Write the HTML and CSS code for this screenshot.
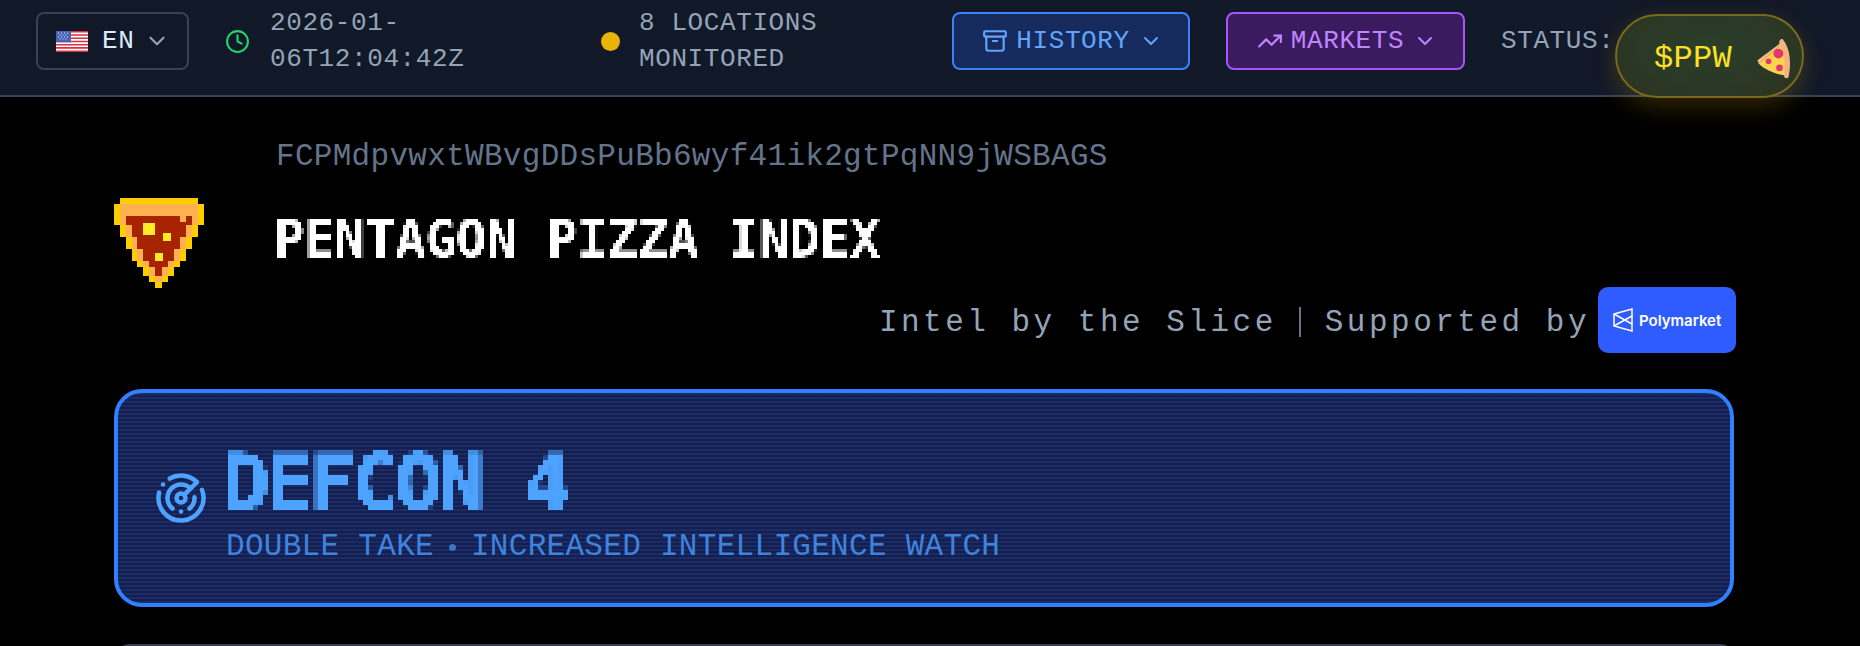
FILE: index.html
```html
<!DOCTYPE html>
<html lang="en">
<head>
    <meta charset="UTF-8">
    <meta name="viewport" content="width=device-width, initial-scale=1.0">
    <title>Pentagon Pizza Index</title>
    <link rel="stylesheet" href="styles.css">
</head>
<body>
    <!-- Blocky look for the heading text -->
    <svg class="filters" width="0" height="0">
        <filter id="pixel-sm" x="0" y="0" width="100%" height="100%">
            <feFlood x="1" y="1" width="1" height="1"/>
            <feComposite width="3" height="3"/>
            <feTile result="dots"/>
            <feComposite in="SourceGraphic" in2="dots" operator="in"/>
            <feMorphology operator="dilate" radius="1"/>
        </filter>
        <filter id="pixel-lg" x="0" y="0" width="100%" height="100%">
            <feFlood x="2" y="2" width="1" height="1"/>
            <feComposite width="5" height="5"/>
            <feTile result="dots"/>
            <feComposite in="SourceGraphic" in2="dots" operator="in"/>
            <feMorphology operator="dilate" radius="2"/>
        </filter>
    </svg>

    <!-- Top Bar -->
    <header class="top-bar">
        <button class="lang-btn">
            <svg class="flag" viewBox="0 0 32 21" width="32" height="21">
                <rect width="32" height="21" fill="#fff"/>
                <path d="M0 0h32v1.6H0zM0 3.2h32v1.6H0zM0 6.4h32V8H0zM0 9.7h32v1.6H0zM0 12.9h32v1.6H0zM0 16.1h32v1.6H0zM0 19.4h32V21H0z" fill="#d8313f"/>
                <rect width="15" height="11.3" fill="#4a63b5"/>
                <path d="M2 2h1M5 2h1M8 2h1M11 2h1M3.5 4h1M6.5 4h1M9.5 4h1M2 6h1M5 6h1M8 6h1M11 6h1M3.5 8h1M6.5 8h1M9.5 8h1" stroke="#dfe6f7" stroke-width="1"/>
            </svg>
            <span>EN</span>
            <svg class="icon chevron" viewBox="0 0 24 24" width="26" height="26"><path d="m6 9 6 6 6-6"/></svg>
        </button>

        <div class="status-item date-item">
            <svg class="icon clock" viewBox="0 0 24 24" width="25" height="25"><circle cx="12" cy="12" r="10"/><polyline points="12 6 12 12 16 14"/></svg>
            <span>2026-01-06T12:04:42Z</span>
        </div>

        <div class="status-item locations-item">
            <span class="dot"></span>
            <span>8 LOCATIONS MONITORED</span>
        </div>

        <button class="nav-btn history-btn">
            <svg class="icon" viewBox="0 0 24 24" width="26" height="26"><rect x="2" y="3" width="20" height="5" rx="1"/><path d="M4 8v11a2 2 0 0 0 2 2h12a2 2 0 0 0 2-2V8"/><path d="M10 12h4"/></svg>
            <span>HISTORY</span>
            <svg class="icon chevron" viewBox="0 0 24 24" width="24" height="24"><path d="m6 9 6 6 6-6"/></svg>
        </button>

        <button class="nav-btn markets-btn">
            <svg class="icon" viewBox="0 0 24 24" width="26" height="26"><polyline points="22 7 13.5 15.5 8.5 10.5 2 17"/><polyline points="16 7 22 7 22 13"/></svg>
            <span>MARKETS</span>
            <svg class="icon chevron" viewBox="0 0 24 24" width="24" height="24"><path d="m6 9 6 6 6-6"/></svg>
        </button>

        <span class="status-label">STATUS:</span>
    </header>

    <!-- Token pill floats over the bar -->
    <a class="token-pill">
        <span>$PPW</span>
        <svg viewBox="0 0 40 40" width="44" height="44">
            <path d="M6 25 L29 6 C33 13 33 27 31 36 C22 35 12 31 6 25Z" fill="#fcd34d"/>
            <path d="M28 3 C35 11 36 27 33 38 C31 39 29 38 29 36 C31 27 30 14 25 7 C24 5 26 2 28 3Z" fill="#f4b183"/>
            <path d="M6 25 L29 6 L25 7 L5 22Z" fill="#f6b98c"/>
            <circle cx="24" cy="16" r="4.5" fill="#e8336d"/>
            <circle cx="25" cy="29" r="3" fill="#e8336d"/>
            <circle cx="15" cy="23" r="2.6" fill="#e8336d"/>
        </svg>
    </a>

    <main class="content">
        <div class="brand">
            <svg class="logo" viewBox="27 24 270 270" width="90" height="90" shape-rendering="crispEdges">
                <path fill="#ffcc00" d="M45 24H279V42H297V106H279V141H261V177H243V212H225V230H208V258H190V276H172V294H151V276H133V258H115V230H97V212H81V177H63V141H45V106H27V42H45Z"/>
                <path fill="#ffb04f" d="M45 42H279V106H261V141H243V177H225V212H208V230H190V258H172V276H151V258H133V230H115V212H97V177H81V141H63V106H45Z"/>
                <path fill="#a82400" d="M63 78H225V95H243V78H261V106H243V141H225V177H208V212H190V230H172V258H151V230H133V212H115V177H97V141H80V106H63Z"/>
                <path fill="#ffeb26" d="M115 100H151V136H115ZM173 129H198V154H173ZM150 188H175V212H150Z"/>
            </svg>
            <div class="brand-text">
                <p class="address">FCPMdpvwxtWBvgDDsPuBb6wyf41ik2gtPqNN9jWSBAGS</p>
                <h1 class="site-title">PENTAGON PIZZA INDEX</h1>
            </div>
        </div>

        <div class="tagline">
            <span class="tagline-text">Intel by the Slice</span>
            <span class="divider"></span>
            <span class="tagline-text">Supported by</span>
            <div class="poly-badge">
                <svg viewBox="0 0 20 24" width="20" height="24" fill="none" stroke="#fff" stroke-width="1.5">
                    <path d="M1 6 19 1V23L1 18Z"/>
                    <path d="M1 6 19 16M1 18 19 8"/>
                </svg>
                <span>Polymarket</span>
            </div>
        </div>

        <section class="defcon-card">
            <svg class="icon radar" viewBox="0 0 24 24" width="54" height="54">
                <path d="M19.07 4.93A10 10 0 0 0 6.99 3.34"/><path d="M4 6h.01"/><path d="M2.29 9.62A10 10 0 1 0 21.31 8.35"/><path d="M16.24 7.76A6 6 0 1 0 8.23 16.67"/><path d="M12 18h.01"/><path d="M17.99 11.66A6 6 0 0 1 15.77 16.67"/><circle cx="12" cy="12" r="2"/><path d="m13.41 10.59 5.66-5.66"/>
            </svg>
            <div class="defcon-text">
                <h2 class="defcon-level">DEFCON 4</h2>
                <p class="defcon-desc">DOUBLE TAKE<span class="sep"></span>INCREASED INTELLIGENCE WATCH</p>
            </div>
        </section>

        <section class="next-card"></section>
    </main>
</body>
</html>
```

FILE: styles.css
```css
/* General Styling */
* {
    margin: 0;
    padding: 0;
    box-sizing: border-box;
}

html, body {
    height: 646px;
    overflow: hidden;
}

body {
    background: #000;
    font-family: "Liberation Mono", monospace;
    color: #94a3b8;
}

.filters {
    position: absolute;
}

.icon {
    fill: none;
    stroke: currentColor;
    stroke-width: 2;
    stroke-linecap: round;
    stroke-linejoin: round;
    flex: none;
}

/* Top Bar */
.top-bar {
    display: flex;
    align-items: center;
    gap: 36px;
    height: 97px;
    padding: 0 0 13px 36px;
    background: #111827;
    border-bottom: 2px solid #374151;
    font-size: 26px;
    letter-spacing: 0.6px;
    line-height: 36px;
    white-space: nowrap;
}

button {
    font: inherit;
    letter-spacing: inherit;
    cursor: pointer;
}

.lang-btn {
    display: flex;
    align-items: center;
    flex: 0 0 153px;
    height: 58px;
    padding-left: 18px;
    background: transparent;
    border: 2px solid #374151;
    border-radius: 8px;
    color: #dbeafe;
}

.flag {
    margin-right: 14px;
}

.lang-btn .chevron {
    margin-left: 10px;
    color: #94a3b8;
}

.status-item {
    display: flex;
    align-items: center;
    white-space: normal;
    color: #94a3b8;
}

.date-item {
    flex: 0 0 340px;
    gap: 20px;
}

.date-item span {
    width: 220px;
}

.locations-item {
    flex: 0 0 315px;
    gap: 19px;
}

.locations-item span:last-child {
    width: 240px;
}

.clock {
    color: #22d36e;
}

.dot {
    flex: none;
    width: 19px;
    height: 19px;
    border-radius: 50%;
    background: #eab308;
}

.nav-btn {
    display: flex;
    align-items: center;
    justify-content: center;
    gap: 8px;
    height: 58px;
    border-radius: 8px;
    border: 2px solid;
}

.nav-btn .chevron {
    margin: 0 -3px 0 1px;
}

.history-btn {
    flex: 0 0 238px;
    background: #172a5e;
    border-color: #3b82f6;
    color: #60a5fa;
}

.markets-btn {
    flex: 0 0 239px;
    background: #3a1b60;
    border-color: #a855f7;
    color: #c084fc;
}

.token-pill {
    position: absolute;
    top: 14px;
    left: 1615px;
    width: 189px;
    height: 84px;
    display: flex;
    align-items: center;
    gap: 20px;
    padding: 4px 0 0 37px;
    background: radial-gradient(ellipse at 50% 40%, #2a3f2a, #2b3320);
    border: 2px solid #7a6a1c;
    border-radius: 42px;
    box-shadow: 0 8px 24px rgba(234, 179, 8, 0.22);
    color: #fde022;
    font-size: 32px;
    letter-spacing: 0.3px;
}

/* Main Content */
.content {
    padding: 0 124px 0 114px;
}

.brand {
    display: flex;
    align-items: flex-start;
    gap: 72px;
    height: 189px;
    padding-top: 38px;
}

.logo {
    flex: none;
    margin-top: 63px;
}

.address {
    font-size: 31px;
    line-height: 44px;
    letter-spacing: 0.3px;
    color: #64748b;
}

.site-title {
    margin: 31px 0 0 -2px;
    font-family: "DejaVu Sans Mono", monospace;
    font-size: 51px;
    font-weight: bold;
    line-height: 60px;
    letter-spacing: -0.4px;
    color: #fff;
    filter: url(#pixel-sm);
}

.tagline {
    display: flex;
    align-items: center;
    justify-content: flex-end;
    height: 66px;
    margin-top: 1px;
    font-size: 31px;
    letter-spacing: 3.5px;
    color: #94a3b8;
    white-space: nowrap;
}

.tagline-text {
    padding-top: 4px;
}

.divider {
    width: 2px;
    height: 30px;
    margin: 3px 24px 0 22px;
    background: #64748b;
}

.poly-badge {
    display: flex;
    align-items: center;
    gap: 6px;
    width: 138px;
    height: 66px;
    margin-left: 8px;
    padding-left: 15px;
    background: #2e5cff;
    border-radius: 10px;
    color: #fff;
    font-family: Inter, sans-serif;
    font-size: 15px;
    font-weight: 600;
    letter-spacing: 0;
}

.defcon-card {
    display: flex;
    align-items: center;
    gap: 15px;
    height: 218px;
    margin: 36px 2px 0 0;
    padding-left: 36px;
    border: 4px solid #3080ff;
    border-radius: 28px;
    background:
        linear-gradient(90deg, rgba(255, 0, 0, 0.05), rgba(0, 255, 0, 0.02), rgba(0, 0, 255, 0.05)) 0 0 / 3px 100%,
        linear-gradient(rgba(96, 165, 250, 0.05) 50%, rgba(0, 0, 0, 0.2) 50%) 0 0 / 100% 4px,
        #15245f;
    color: #4da3ff;
}

.defcon-text {
    margin-top: 14px;
}

.defcon-level {
    font-family: "DejaVu Sans Mono", monospace;
    font-size: 78px;
    font-weight: bold;
    line-height: 76px;
    letter-spacing: -4px;
    -webkit-text-stroke: 1px #4da3ff;
    filter: url(#pixel-lg);
}

.defcon-desc {
    margin: 8px 0 0 3px;
    display: flex;
    align-items: center;
    font-size: 31px;
    line-height: 36px;
    letter-spacing: 0.3px;
    color: #3f83dd;
}

.sep {
    width: 7px;
    height: 7px;
    margin: 0 15px;
    border-radius: 50%;
    background: #3a74c4;
}

.next-card {
    height: 60px;
    margin-top: 37px;
    border: 2px solid #374151;
    border-radius: 16px;
    background: #0b0f17;
}
```
